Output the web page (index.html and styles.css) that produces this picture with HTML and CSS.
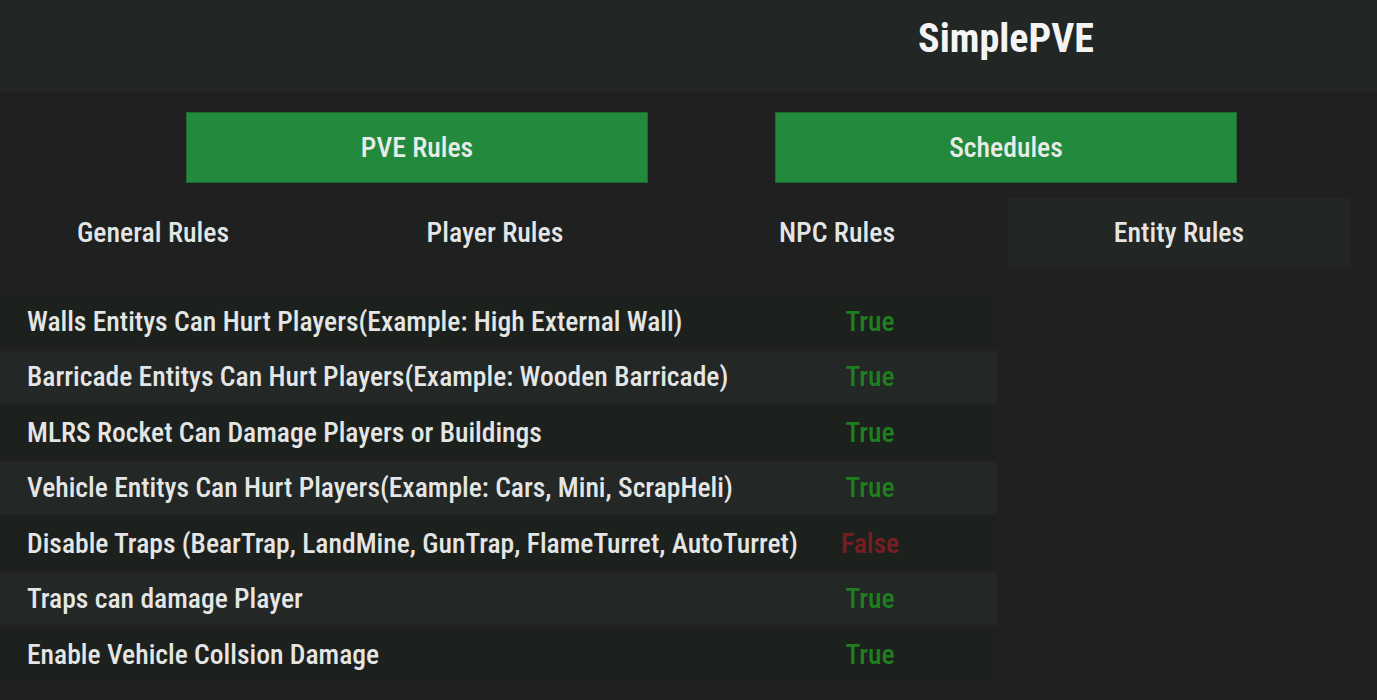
FILE: index.html
```html
<!DOCTYPE html>
<html>
<head>
    <meta charset="UTF-8">
    <meta name="viewport" content="width=device-width, initial-scale=1.0">
    <title>SimplePVE</title>
    <link rel="stylesheet" href="styles.css">
</head>
<body>
    <div class="header">
        <div></div>
        <h1 class="title">SimplePVE</h1>
    </div>

    <div class="main-tabs">
        <button class="main-tab">PVE Rules</button>
        <button class="main-tab">Schedules</button>
    </div>

    <div class="sub-tabs">
        <div class="sub-tab">General Rules</div>
        <div class="sub-tab">Player Rules</div>
        <div class="sub-tab">NPC Rules</div>
        <div class="sub-tab active">Entity Rules</div>
    </div>

    <div class="rules">
        <div class="rule">
            <span class="rule-name">Walls Entitys Can Hurt Players(Example: High External Wall)</span>
            <span class="rule-value true">True</span>
        </div>
        <div class="rule alt">
            <span class="rule-name">Barricade Entitys Can Hurt Players(Example: Wooden Barricade)</span>
            <span class="rule-value true">True</span>
        </div>
        <div class="rule">
            <span class="rule-name">MLRS Rocket Can Damage Players or Buildings</span>
            <span class="rule-value true">True</span>
        </div>
        <div class="rule alt">
            <span class="rule-name">Vehicle Entitys Can Hurt Players(Example: Cars, Mini, ScrapHeli)</span>
            <span class="rule-value true">True</span>
        </div>
        <div class="rule">
            <span class="rule-name">Disable Traps (BearTrap, LandMine, GunTrap, FlameTurret, AutoTurret)</span>
            <span class="rule-value false">False</span>
        </div>
        <div class="rule alt">
            <span class="rule-name">Traps can damage Player</span>
            <span class="rule-value true">True</span>
        </div>
        <div class="rule">
            <span class="rule-name">Enable Vehicle Collsion Damage</span>
            <span class="rule-value true">True</span>
        </div>
    </div>
</body>
</html>
```

FILE: styles.css
```css
body {
    font-family: "Roboto Condensed", Roboto, "Liberation Sans", sans-serif;
    font-stretch: 90%;
    font-weight: 500;
    margin: 0;
    background-color: #1f201f;
    color: #e4e6e5;
    overflow: hidden;
}

.header {
    height: 92px;
    box-sizing: border-box;
    padding: 14px 0 0 186px;
    background-color: #222624;
    display: grid;
    grid-template-columns: 462px 462px;
    column-gap: 127px;
}

.title {
    margin: 0;
    font-size: 40px;
    line-height: 50px;
    font-weight: 700;
    color: #f4f4f4;
    text-align: center;
}

.main-tabs {
    display: flex;
    gap: 127px;
    padding: 20px 0 0 186px;
}

.main-tab {
    width: 462px;
    height: 71px;
    background-color: #238a3d;
    border: 1px solid #1d6a30;
    color: #e8ece9;
    font-family: inherit;
    font-stretch: inherit;
    font-weight: 500;
    font-size: 27.7px;
    padding: 0;
    cursor: pointer;
}

.sub-tabs {
    display: flex;
    margin: 15px 0 0 -18px;
}

.sub-tab {
    width: 342px;
    height: 69px;
    display: flex;
    align-items: center;
    justify-content: center;
    font-size: 27.8px;
    background-color: #1e211f;
}

.sub-tab.active {
    background-color: #222624;
}

.rules {
    width: 997px;
    margin-top: 28px;
    display: flex;
    flex-direction: column;
    gap: 3.6px;
}

.rule {
    height: 52px;
    display: flex;
    align-items: center;
    background-color: #1d211e;
    font-size: 27.6px;
}

.rule.alt {
    background-color: #232725;
}

.rule-name {
    flex: 1;
    padding-left: 27px;
    white-space: nowrap;
}

.rule-value {
    width: 100px;
    margin-right: 77px;
    text-align: center;
}

.true {
    color: #1d7f1d;
}

.false {
    color: #7a1d22;
}
```
